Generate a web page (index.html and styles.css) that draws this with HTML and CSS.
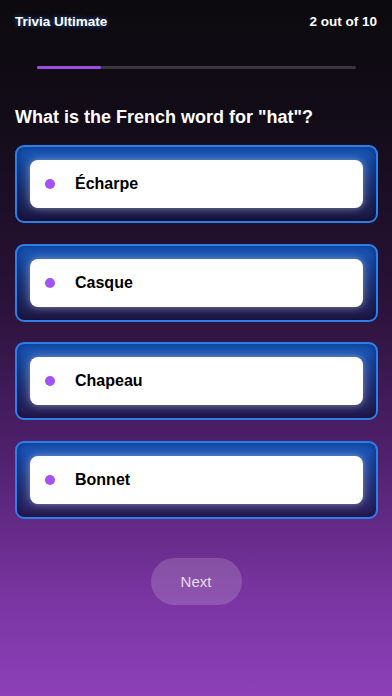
FILE: index.html
```html
<!DOCTYPE html>
<html>
<head>
<meta charset="utf-8">
<link rel="stylesheet" href="styles.css">
</head>
<body>
<div class="screen">
  <header class="top">
    <span class="brand">Trivia Ultimate</span>
    <span class="count">2 out of 10</span>
  </header>
  <div class="progress"><div class="fill" style="width:20%"></div></div>
  <h1 class="question">What is the French word for "hat"?</h1>
  <div class="options">
    <div class="option"><div class="card"><span class="dot"></span><span class="label">Écharpe</span></div></div>
    <div class="option"><div class="card"><span class="dot"></span><span class="label">Casque</span></div></div>
    <div class="option"><div class="card"><span class="dot"></span><span class="label">Chapeau</span></div></div>
    <div class="option"><div class="card"><span class="dot"></span><span class="label">Bonnet</span></div></div>
  </div>
  <div class="actions"><button class="next">Next</button></div>
</div>
</body>
</html>
```
FILE: styles.css
```css
html, body { margin: 0; padding: 0; }
body {
  width: 392px;
  height: 696px;
  overflow: hidden;
  font-family: "Liberation Sans", Arial, sans-serif;
  background: linear-gradient(180deg, #0c0a0e 0px, #120c18 120px, #2a1238 300px, #51216f 460px, #7a35a2 600px, #8d40b8 696px);
  color: #fff;
}
.screen {
  display: flex;
  flex-direction: column;
  height: 696px;
}
.top {
  display: flex;
  justify-content: space-between;
  align-items: center;
  padding: 13px 15px 0 15px;
  height: 16px;
}
.brand {
  font-size: 13.5px;
  font-weight: bold;
  text-shadow: 0 0 5px rgba(50, 130, 255, 0.7);
}
.count {
  font-size: 13.5px;
  font-weight: bold;
}
.progress {
  margin: 37px 36px 0 37px;
  height: 3px;
  background: #3a3640;
  border-radius: 2px;
}
.fill {
  height: 3px;
  background: #9b4fe0;
  border-radius: 2px;
}
.question {
  margin: 37px 15px 0 15px;
  font-size: 18px;
  font-weight: bold;
  line-height: 22px;
}
.options {
  display: flex;
  flex-direction: column;
  gap: 20.6px;
  margin: 17px 14px 0 15px;
}
.option {
  border: 2px solid #2c7fe6;
  border-radius: 9px;
  background: linear-gradient(180deg, rgba(22, 92, 196, 0.98) 0%, rgba(28, 62, 140, 0.85) 50%, rgba(26, 24, 70, 0.75) 100%);
  box-shadow: inset 0 0 10px rgba(0, 0, 40, 0.5);
  padding: 13px;
}
.card {
  height: 48px;
  background: #fff;
  border-radius: 8px;
  display: flex;
  align-items: center;
  box-shadow: 0 0 8px rgba(255, 255, 255, 0.45);
}
.dot {
  width: 10px;
  height: 10px;
  border-radius: 50%;
  background: #a352f5;
  margin-left: 15px;
}
.label {
  margin-left: 20px;
  font-size: 16px;
  font-weight: bold;
  color: #000;
}
.actions {
  display: flex;
  justify-content: center;
  margin-top: 39px;
}
.next {
  width: 91px;
  height: 47px;
  border: none;
  border-radius: 24px;
  background: rgba(255, 255, 255, 0.16);
  color: #e8dcef;
  font-family: "Liberation Sans", Arial, sans-serif;
  font-size: 15px;
}
```
